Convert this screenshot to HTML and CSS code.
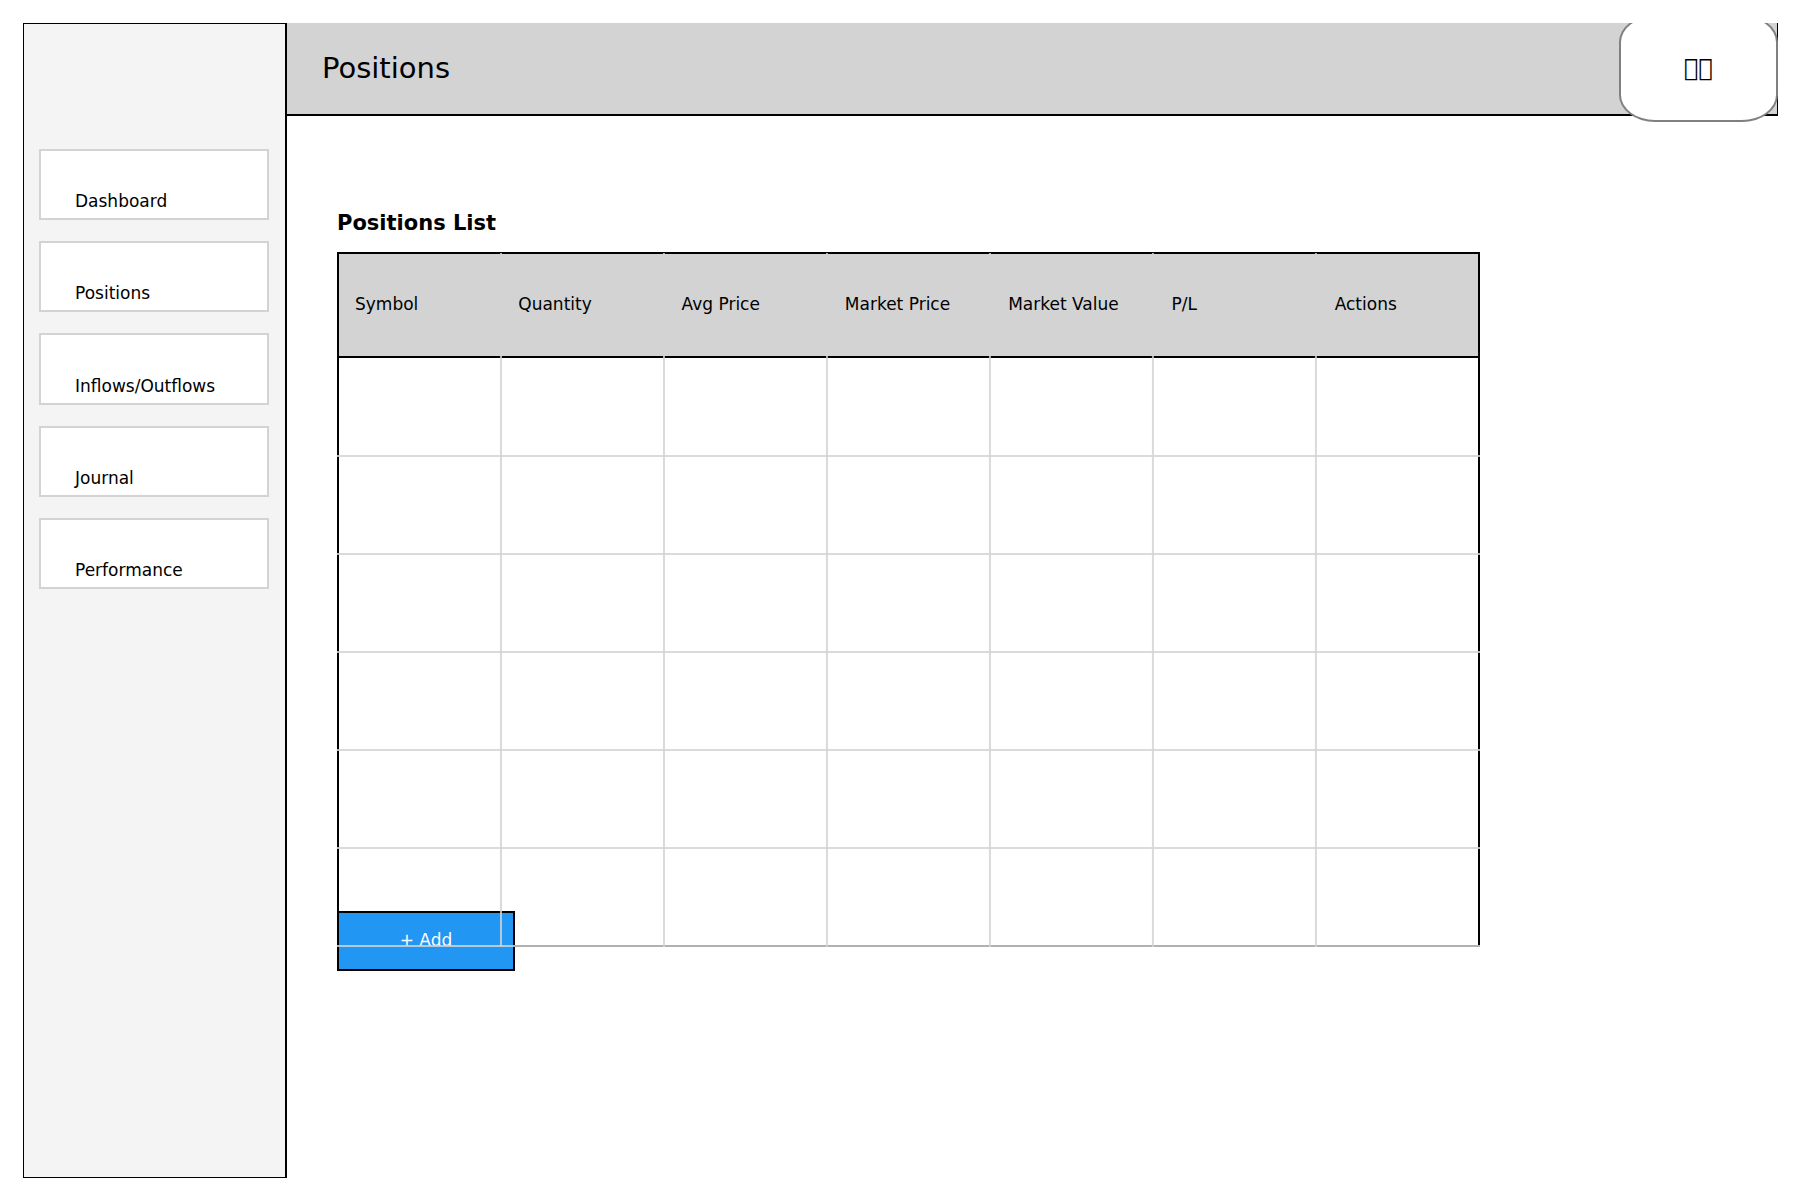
FILE: index.html
```html
<!DOCTYPE html>
<html lang="en">
<head>
  <meta charset="utf-8">
  <title>Positions</title>
  <link rel="stylesheet" href="styles.css">
</head>
<body>
  <div class="app">
    <aside class="sidebar">
      <nav class="menu">
        <a class="menu-item" href="#dashboard">Dashboard</a>
        <a class="menu-item" href="#positions">Positions</a>
        <a class="menu-item" href="#flows">Inflows/Outflows</a>
        <a class="menu-item" href="#journal">Journal</a>
        <a class="menu-item" href="#performance">Performance</a>
      </nav>
    </aside>
    <div class="page">
      <header class="topbar">
        <h1 class="title">Positions</h1>
        <button class="profile" type="button" aria-label="Profile">&#xE8F0;&#xE8F1;</button>
      </header>
      <main class="content">
        <h2 class="heading">Positions List</h2>
        <div class="grid">
          <table class="positions">
            <thead>
              <tr><th>Symbol</th><th>Quantity</th><th>Avg Price</th><th>Market Price</th><th>Market Value</th><th>P/L</th><th>Actions</th></tr>
            </thead>
            <tbody>
              <tr><td></td><td></td><td></td><td></td><td></td><td></td><td></td></tr>
              <tr><td></td><td></td><td></td><td></td><td></td><td></td><td></td></tr>
              <tr><td></td><td></td><td></td><td></td><td></td><td></td><td></td></tr>
              <tr><td></td><td></td><td></td><td></td><td></td><td></td><td></td></tr>
              <tr><td></td><td></td><td></td><td></td><td></td><td></td><td></td></tr>
              <tr><td></td><td></td><td></td><td></td><td></td><td></td><td></td></tr>
            </tbody>
          </table>
        </div>
        <button class="add" type="button">+ Add</button>
      </main>
    </div>
  </div>
</body>
</html>
```
FILE: styles.css
```css
* {
  box-sizing: border-box;
}

body {
  margin: 0;
  background: #fff;
  color: #000;
  font: 17px/20px "DejaVu Sans", sans-serif;
}

.app {
  display: flex;
  min-height: 100vh;
  padding: 23px 22px 22px 23px;
}

.sidebar {
  flex: none;
  width: 264px;
  padding: 125px 16px 0 15px;
  background: #f4f4f4;
  border: 1px solid #000;
  border-right-width: 2px;
}

.menu {
  display: grid;
  grid-auto-rows: 1fr;
  gap: 21px;
  min-height: 440px;
}

.menu-item {
  display: flex;
  align-items: flex-end;
  padding: 0 16px 7px 34px;
  background: #fff;
  border: 2px solid #d3d3d3;
  color: inherit;
  text-decoration: none;
}

.page {
  flex: 1;
  min-width: 0;
}

/* The profile bubble is cut at the top edge but hangs below the bar. */
.topbar {
  display: flex;
  align-items: center;
  justify-content: space-between;
  height: 93px;
  padding-left: 35px;
  background: #d3d3d3;
  border-right: 1px solid #000;
  border-bottom: 2px solid #000;
  clip-path: inset(0 0 -10px 0);
}

.title {
  margin: 0 0 2px;
  font-size: 29px;
  line-height: 36px;
  font-weight: 400;
}

.profile {
  flex: none;
  width: 159px;
  height: 107px;
  margin-right: -1px;
  padding: 0 0 2px;
  background: #fff;
  border: 2px solid #808080;
  border-radius: 36px / 27px;
  color: #000;
  font: 24px/28px "DejaVu Sans", sans-serif;
}

.content {
  padding: 95px 50px 0;
}

.heading {
  margin: 0 0 17px;
  font-size: 21px;
  line-height: 24px;
  font-weight: 700;
}

.grid {
  position: relative;
  max-width: 1143px;
}

/* Translucent grid lines run over the table frame and the add button. */
.grid::before,
.grid::after {
  content: "";
  position: absolute;
  z-index: 2;
  bottom: 0;
  pointer-events: none;
}

.grid::before {
  top: 1px;
  left: 2px;
  width: calc((100% - 2px) * 6 / 7);
  background: linear-gradient(to left, rgba(211, 211, 211, 0.84) 2px, transparent 2px) 0 0 / calc(100% / 6) 100%;
}

.grid::after {
  top: 107px;
  left: 0;
  width: 100%;
  background: linear-gradient(to top, rgba(211, 211, 211, 0.84) 2px, transparent 2px) 0 0 / 100% calc(100% / 6);
}

.positions {
  width: 100%;
  table-layout: fixed;
  border-collapse: separate;
  border-spacing: 0;
}

.positions th {
  height: 106px;
  padding: 0 0 2px 18px;
  background: #d3d3d3;
  border: 0 solid #000;
  border-width: 2px 0;
  font-weight: 400;
  text-align: left;
  white-space: nowrap;
}

.positions td {
  height: 98px;
  padding: 0;
  border: 0 solid #000;
}

.positions tbody tr:first-child td {
  height: 99px;
}

.positions tr > :first-child {
  padding-left: 16px;
  border-left-width: 2px;
}

.positions tr > :last-child {
  border-right-width: 2px;
}

.positions tbody tr:last-child td {
  border-bottom-width: 2px;
}

.add {
  position: relative;
  z-index: 1;
  display: block;
  width: 178px;
  height: 60px;
  margin-top: -36px;
  padding: 0 0 2px;
  background: #2196f3;
  border: 2px solid #000;
  color: #fff;
  font: inherit;
}
```
